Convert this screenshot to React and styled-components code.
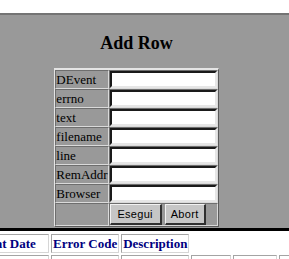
import styled, { createGlobalStyle } from "styled-components";

const fields = ["DEvent", "errno", "text", "filename", "line", "RemAddr", "Browser"];
const headers = ["Event Date", "Error Code", "Description"];
const dataCells = [75, 61, 65, 38, 42, 60];

const GlobalStyle = createGlobalStyle`
  html, body {
    margin: 0;
    padding: 0;
    overflow: hidden;
    background: #fff;
    font-family: "Liberation Serif", "Times New Roman", serif;
  }
`;

export default function App() {
  return (
    <Page>
      <GlobalStyle />
      <Panel>
        <Title>Add Row</Title>
        <FormTable>
          <tbody>
            {fields.map((f) => (
              <tr key={f}>
                <Label>{f}</Label>
                <Cell>
                  <Field type="text" name={f} />
                </Cell>
              </tr>
            ))}
            <tr>
              <Label />
              <Cell>
                <Buttons>
                  <Button type="button" w={52}>Esegui</Button>
                  <Button type="button" w={41}>Abort</Button>
                </Buttons>
              </Cell>
            </tr>
          </tbody>
        </FormTable>
      </Panel>

      <Grid>
        <tbody>
          <tr>
            {headers.map((h, i) => (
              <Head key={h} wide={i === 0}>{h}</Head>
            ))}
          </tr>
          <tr>
            {dataCells.map((w, i) => (
              <Data key={i} style={{ width: w }} />
            ))}
          </tr>
        </tbody>
      </Grid>
    </Page>
  );
}

const Page = styled.div`
  width: 289px;
  height: 259px;
  overflow: hidden;
  padding-top: 13px;
  box-sizing: border-box;
`;

const Panel = styled.section`
  background: #999999;
  border-top: 2px solid #747474;
  border-bottom: 3px solid #000;
  padding: 0 16px 1px 0;
`;

const Title = styled.h2`
  margin: 0;
  padding: 18px 0 15px;
  font-size: 18px;
  line-height: 20px;
  font-weight: bold;
  text-align: center;
  color: #000;
`;

const FormTable = styled.table`
  margin: 0 auto;
  border-collapse: separate;
  border-spacing: 0;
  border: 1px solid;
  border-color: #e4e4e4 #5a5a5a #5a5a5a #e4e4e4;
  border-top-width: 2px;
`;

const Label = styled.td`
  padding: 0;
  border: 1px solid;
  border-color: #6e6e6e #dadada #dadada #6e6e6e;
  font-size: 13px;
  line-height: 17px;
  white-space: nowrap;
  color: #000;
  vertical-align: middle;
`;

const Cell = styled.td`
  padding: 0;
  border: 1px solid;
  border-color: #6e6e6e #dadada #dadada #6e6e6e;
`;

const Field = styled.input`
  display: block;
  box-sizing: border-box;
  width: 107px;
  height: 17px;
  margin: 0;
  padding: 0 2px;
  background: #fff;
  border: 2px solid;
  border-color: #1a1a1a #e6e6e6 #e6e6e6 #1a1a1a;
  outline: none;
`;

const Buttons = styled.div`
  display: flex;
  gap: 3px;
  height: 21px;
  align-items: stretch;
`;

const Button = styled.button`
  width: ${(p) => p.w}px;
  margin: 0;
  padding: 0;
  box-sizing: border-box;
  background: #c6c6c6;
  border: 2px solid;
  border-color: #f2f2f2 #303030 #303030 #f2f2f2;
  border-width: 1px 2px 2px 1px;
  font-family: "Liberation Sans", Arial, sans-serif;
  font-size: 11px;
  letter-spacing: 0.3px;
  color: #000;
`;

const Grid = styled.table`
  width: max-content;
  margin: 1px 0 0 -30px;
  border-collapse: separate;
  border-spacing: 2px;
`;

const Head = styled.th`
  padding: 1px 1px;
  min-width: ${(p) => (p.wide ? "72px" : "0")};
  border: 1px solid;
  border-color: #a4a4a4 #d6d6d6 #d6d6d6 #a4a4a4;
  font-size: 13px;
  line-height: 15px;
  font-weight: bold;
  color: #00007f;
  text-align: left;
  white-space: nowrap;
`;

const Data = styled.td`
  height: 18px;
  padding: 0;
  border: 1px solid;
  border-color: #a4a4a4 #d6d6d6 #d6d6d6 #a4a4a4;
`;
